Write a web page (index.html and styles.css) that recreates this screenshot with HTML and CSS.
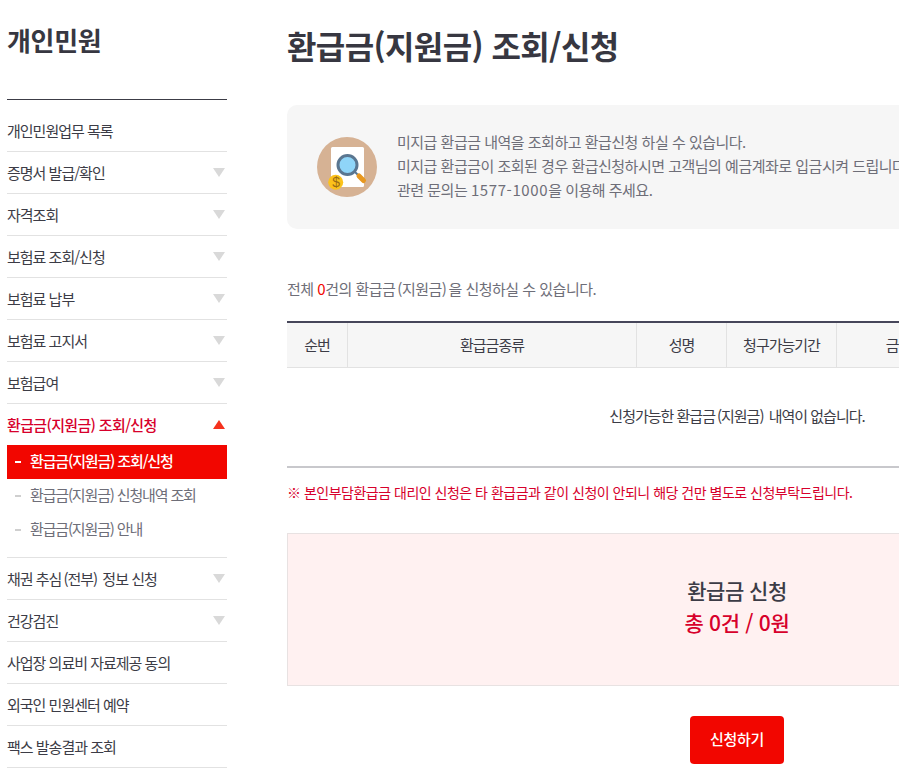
FILE: index.html
```html
<!DOCTYPE html>
<html lang="ko">
<head>
<meta charset="utf-8">
<title>환급금(지원금) 조회/신청</title>
<link rel="stylesheet" href="styles.css">
</head>
<body>
<div class="page">
  <aside class="side">
    <h2 class="side-title">개인민원</h2>
    <ul class="menu">
      <li class="item"><span>개인민원업무 목록</span></li>
      <li class="item"><span>증명서 발급/확인</span><i class="tri"></i></li>
      <li class="item"><span>자격조회</span><i class="tri"></i></li>
      <li class="item"><span>보험료 조회/신청</span><i class="tri"></i></li>
      <li class="item"><span>보험료 납부</span><i class="tri"></i></li>
      <li class="item"><span>보험료 고지서</span><i class="tri"></i></li>
      <li class="item"><span>보험급여</span><i class="tri"></i></li>
      <li class="group">
        <div class="item open"><span>환급금(지원금) 조회/신청</span><i class="tri up"></i></div>
        <ul class="sub">
          <li class="sub-item on">환급금(지원금) 조회/신청</li>
          <li class="sub-item">환급금(지원금) 신청내역 조회</li>
          <li class="sub-item">환급금(지원금) 안내</li>
        </ul>
      </li>
      <li class="item"><span>채권 추심<span class="pr">(전부)</span> 정보 신청</span><i class="tri"></i></li>
      <li class="item"><span>건강검진</span><i class="tri"></i></li>
      <li class="item"><span>사업장 의료비 자료제공 동의</span></li>
      <li class="item"><span>외국인 민원센터 예약</span></li>
      <li class="item"><span>팩스 발송결과 조회</span></li>
    </ul>
  </aside>
  <main class="main">
    <h1 class="title">환급금(지원금) 조회/신청</h1>
    <section class="info">
      <svg class="info-icon" width="60" height="60" viewBox="0 0 60 60" aria-hidden="true">
        <circle cx="30" cy="30" r="30" fill="#d6b294"/>
        <rect x="14" y="10" width="33" height="40" rx="1.5" fill="#fff"/>
        <line x1="36" y1="33" x2="42" y2="39" stroke="#5a7690" stroke-width="2"/>
        <line x1="42" y1="39" x2="46.500" y2="43.500" stroke="#e8981f" stroke-width="5" stroke-linecap="round"/>
        <circle cx="30.500" cy="28" r="9.500" fill="#8fd5f8" stroke="#5a7690" stroke-width="3"/>
        <circle cx="18.700" cy="45.300" r="7.500" fill="#fcc21b"/>
        <text x="18.700" y="50.300" class="coin">$</text>
      </svg>
      <div class="info-text">
        <p>미지급 환급금 내역을 조회하고 환급신청 하실 수 있습니다.</p>
        <p>미지급 환급금이 조회된 경우 환급신청하시면 고객님의 예금계좌로 입금시켜 드립니다.</p>
        <p>관련 문의는 <span class="num">1577-1000</span>을 이용해 주세요.</p>
      </div>
    </section>
    <p class="count">전체 <em>0</em>건의 환급금<span class="pr">(지원금)</span>을 신청하실 수 있습니다.</p>
    <div class="table">
      <div class="thead">
        <div class="th c1">순번</div>
        <div class="th c2">환급금종류</div>
        <div class="th c3">성명</div>
        <div class="th c4">청구가능기간</div>
        <div class="th c5">금액</div>
        <div class="th c6"></div>
      </div>
      <div class="empty"><span>신청가능한 환급금<span class="pr">(지원금)</span> 내역이 없습니다.</span></div>
    </div>
    <p class="notice">※ 본인부담환급금 대리인 신청은 타 환급금과 같이 신청이 안되니 해당 건만 별도로 신청부탁드립니다.</p>
    <section class="sum">
      <div class="sum-title">환급금 신청</div>
      <div class="sum-total">총 0건 / 0원</div>
    </section>
    <div class="actions"><button class="btn" type="button">신청하기</button></div>
  </main>
</div>
</body>
</html>
```
FILE: styles.css
```css
* { box-sizing: border-box; }
html, body { margin: 0; padding: 0; height: 100%; overflow: hidden; background: #fff; }
body { font-family: "Noto Sans CJK KR", "Noto Sans", sans-serif; color: #3c3c46; letter-spacing: -1px; }
ul { list-style: none; margin: 0; padding: 0; }
h1, h2, p { margin: 0; }
.pr { padding: 0 2px; }
.page { display: flex; width: 1187px; padding-left: 7px; gap: 60px; }
.side { flex: 0 0 220px; }
.side-title { font-size: 26px; line-height: 40px; font-weight: 700; padding-top: 20px; height: 100px; border-bottom: 1px solid #3c3c46; color: #373741; letter-spacing: -0.3px; }
.menu { padding-top: 10px; }
.item { display: flex; justify-content: space-between; align-items: center; height: 42px; font-size: 15px; color: #3c3c46; }
.menu > .item { border-bottom: 1px solid #e2e2e2; }
.tri { width: 0; height: 0; margin-right: 2px; border-left: 6px solid transparent; border-right: 6px solid transparent; border-top: 9px solid #d9d9d9; }
.tri.up { border-top: 0; border-bottom: 9px solid #f5321e; }
.item.open { color: #d7002b; font-weight: 500; height: 41px; letter-spacing: -0.65px; }
.group { border-bottom: 1px solid #e2e2e2; padding-bottom: 10px; }
.sub-item { height: 34px; line-height: 31px; padding-left: 23px; font-size: 15px; color: #6e6e78; letter-spacing: -1.15px; position: relative; }
.sub-item::before { content: ""; position: absolute; left: 8px; top: 16px; width: 6px; height: 2px; background: #cfcfcf; }
.sub-item.on { background: #f20600; color: #fff; font-weight: 500; }
.sub-item.on::before { background: #fff; }
.main { flex: 0 0 900px; }
.title { font-size: 32px; line-height: 48px; font-weight: 700; padding-top: 21px; height: 105px; color: #373741; letter-spacing: -0.6px; }
.info { display: flex; align-items: center; gap: 20px; height: 124px; padding-left: 30px; background: #f6f6f6; border-radius: 10px; }
.info-icon { flex: none; }
.coin { font-size: 14px; fill: #9a6c14; text-anchor: middle; font-family: "Liberation Sans", sans-serif; }
.info-text { font-size: 15px; line-height: 24px; margin-top: -3px; color: #6e6e78; letter-spacing: -0.5px; white-space: nowrap; }
.num { letter-spacing: 0.6px; }
.count { margin-top: 50px; font-size: 15px; line-height: 20px; color: #6e6e78; letter-spacing: -0.5px; }
.count em { font-style: normal; color: #f20600; }
.table { margin-top: 22px; border-top: 2px solid #46465a; border-bottom: 2px solid #c8c8cc; }
.thead { display: flex; height: 45px; background: #f6f6f6; border-bottom: 1px solid #e2e2e2; }
.th { display: flex; align-items: center; justify-content: center; padding-bottom: 2px; font-size: 15px; border-left: 1px solid #e2e2e2; }
.th.c1 { width: 60px; border-left: 0; }
.th.c2 { width: 289px; }
.th.c3 { width: 90px; }
.th.c4 { width: 110px; }
.th.c5 { width: 124px; }
.th.c6 { flex: 1; }
.empty { height: 98px; padding-bottom: 3px; display: flex; align-items: center; justify-content: center; font-size: 15px; }
.notice { margin-top: 14px; font-size: 14px; line-height: 20px; color: #d7002b; letter-spacing: -0.5px; }
.sum { margin-top: 31px; height: 153px; padding-bottom: 7px; background: #fff1f1; border: 1px solid #e8e2e2; display: flex; flex-direction: column; align-items: center; justify-content: center; }
.sum-title { font-size: 21px; line-height: 32px; font-weight: 500; letter-spacing: -0.5px; }
.sum-total { font-size: 21px; line-height: 32px; font-weight: 500; color: #d7002b; letter-spacing: -0.3px; }
.actions { display: flex; justify-content: center; margin-top: 30px; }
.btn { width: 94px; height: 48px; padding: 0 0 4px; border: 0; border-radius: 4px; background: #f20600; color: #fff; font: inherit; font-size: 15px; font-weight: 500; letter-spacing: -0.35px; }
```
